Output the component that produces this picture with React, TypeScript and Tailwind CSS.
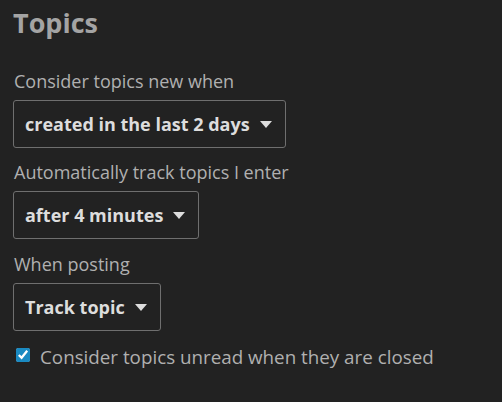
import React from 'react';

function Caret() {
  return (
    <svg width="12" height="7" viewBox="0 0 12 7" className="shrink-0">
      <path d="M0 0 L12 0 L6 7 Z" fill="#dddddd" />
    </svg>
  );
}

function Select({ value }: { value: string }) {
  return (
    <div className="flex">
      <button className="flex items-center gap-[10px] h-[48px] pl-[11px] pr-[13px] border border-[#6f6f6f] rounded-[3px] text-[#dddddd] font-bold text-[18px]">
        <span>{value}</span>
        <Caret />
      </button>
    </div>
  );
}

export default function App() {
  return (
    <div
      className="w-[502px] h-[402px] bg-[#222222] px-[13px] pt-[5px] text-[#b0b0b0] text-[18px]"
      style={{ fontFamily: '"Open Sans", sans-serif' }}
    >
      <h2 className="text-[27px] font-bold text-[#a4a4a4] leading-[36px]">Topics</h2>

      <div className="mt-[27px]">
        <label className="block leading-[27px] mb-[5px] pl-[1px]">Consider topics new when</label>
        <Select value="created in the last 2 days" />
      </div>

      <div className="mt-[11px]">
        <label className="block leading-[27px] mb-[5px] pl-[1px]">Automatically track topics I enter</label>
        <Select value="after 4 minutes" />
      </div>

      <div className="mt-[12px]">
        <label className="block leading-[27px] mb-[5px] pl-[1px]">When posting</label>
        <Select value="Track topic" />
      </div>

      <label className="mt-[13px] flex items-start gap-[10px] pl-[3px] text-[18.8px] leading-[27px]">
        <input type="checkbox" defaultChecked className="mt-[4px] w-[14px] h-[14px] accent-[#1a8ac2]" />
        <span>Consider topics unread when they are closed</span>
      </label>
    </div>
  );
}
